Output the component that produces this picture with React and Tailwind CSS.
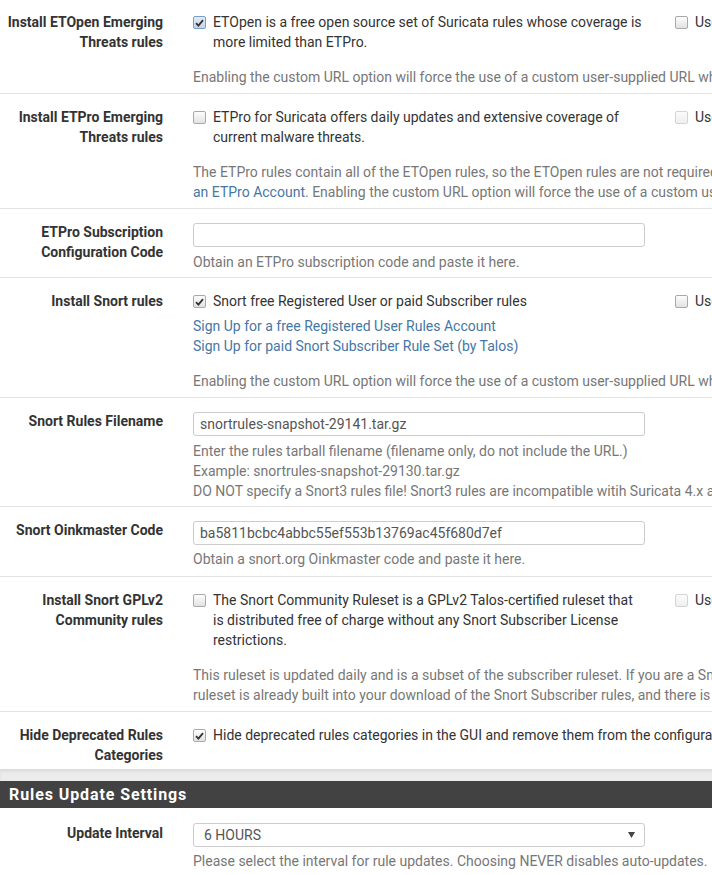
import React from "react";

const Check = ({ checked = false, kind = "normal" }) => {
  let cls =
    "mt-[4px] w-[13px] h-[13px] shrink-0 rounded-[2px] border flex items-center justify-center ";
  if (kind === "focus") cls += "border-[#7a9cc8] bg-gradient-to-b from-[#e2ecf8] to-[#c3d3e8]";
  else if (kind === "disabled") cls += "border-[#d4d4d4] bg-gradient-to-b from-[#fbfbfb] to-[#efefef]";
  else cls += "border-[#a9a9a9] bg-gradient-to-b from-[#fdfdfd] to-[#e2e2e2]";
  return (
    <span className={cls}>
      {checked && (
        <svg width="9" height="8" viewBox="0 0 9 8">
          <path d="M1 4.2 L3.4 6.6 L8 1.2" fill="none" stroke="#333" strokeWidth="1.8" />
        </svg>
      )}
    </span>
  );
};

const Row = ({ label, children, first = false, last = false, pb = "pb-[6px]" }) => (
  <div
    className={
      "flex border-[#e3e3e3] " +
      (last ? "" : "border-b ") +
      (first ? "pt-[12px] " : "pt-[13px] ") +
      pb
    }
  >
    <div className="w-[178px] shrink-0 pr-[15px] text-right font-bold text-[#333] whitespace-nowrap">
      {label}
    </div>
    <div className="w-[964px] shrink-0 px-[15px]">{children}</div>
  </div>
);

const Help = ({ children, className = "" }) => (
  <div className={"text-[#777] whitespace-nowrap " + className}>{children}</div>
);

const CheckLine = ({ checked, kind, children }) => (
  <div className="flex gap-[7px] text-[#333]">
    <Check checked={checked} kind={kind} />
    <div className="whitespace-nowrap">{children}</div>
  </div>
);

const TwoCol = ({ left, right }) => (
  <div className="flex gap-[30px]">
    <div className="w-[452px] shrink-0">{left}</div>
    <div className="w-[452px] shrink-0">{right}</div>
  </div>
);

const Input = ({ value }) => (
  <div className="mt-[1px] w-[452px] h-[24px] border border-[#ccc] rounded-[3px] pl-[6px] text-[#555] leading-[22px] whitespace-nowrap">
    {value}
  </div>
);

export default function App() {
  return (
    <div className="w-[712px] h-[875px] overflow-hidden bg-white font-['Roboto','Liberation_Sans',sans-serif] text-[14px] leading-[20px]">
      <div className="w-[1160px]">
        <Row
          first
          label={
            <>
              Install ETOpen Emerging
              <br />
              Threats rules
            </>
          }
        >
          <TwoCol
            left={
              <CheckLine checked kind="focus">
                ETOpen is a free open source set of Suricata rules whose coverage is
                <br />
                more limited than ETPro.
              </CheckLine>
            }
            right={<CheckLine>Use a custom URL for ETOpen downloads</CheckLine>}
          />
          <Help className="mt-[15px]">
            Enabling the custom URL option will force the use of a custom user-supplied URL when downloading ETOpen rules.
          </Help>
        </Row>

        <Row
          label={
            <>
              Install ETPro Emerging
              <br />
              Threats rules
            </>
          }
        >
          <TwoCol
            left={
              <CheckLine>
                ETPro for Suricata offers daily updates and extensive coverage of
                <br />
                current malware threats.
              </CheckLine>
            }
            right={<CheckLine kind="disabled">Use a custom URL for ETPro downloads</CheckLine>}
          />
          <Help className="mt-[15px]">
            The ETPro rules contain all of the ETOpen rules, so the ETOpen rules are not required and should be disabled when the ETPro rules are selected. Sign up for
            <br />
            <span className="text-[#4577a5]">an ETPro Account</span>. Enabling the custom URL option will force the use of a custom user-supplied URL when downloading ETPro rules.
          </Help>
        </Row>

        <Row
          pb="pb-[5px]"
          label={
            <>
              ETPro Subscription
              <br />
              Configuration Code
            </>
          }
        >
          <Input value="" />
          <Help className="mt-[5px]">Obtain an ETPro subscription code and paste it here.</Help>
        </Row>

        <Row label="Install Snort rules">
          <TwoCol
            left={<CheckLine checked>Snort free Registered User or paid Subscriber rules</CheckLine>}
            right={<CheckLine>Use a custom URL for Snort rule downloads</CheckLine>}
          />
          <div className="mt-[5px] text-[#4577a5] whitespace-nowrap">
            <div>Sign Up for a free Registered User Rules Account</div>
            <div>Sign Up for paid Snort Subscriber Rule Set (by Talos)</div>
          </div>
          <Help className="mt-[15px]">
            Enabling the custom URL option will force the use of a custom user-supplied URL when downloading Snort rules.
          </Help>
        </Row>

        <Row label="Snort Rules Filename" pb="pb-[5px]">
          <Input value="snortrules-snapshot-29141.tar.gz" />
          <Help className="mt-[5px]">
            Enter the rules tarball filename (filename only, do not include the URL.)
            <br />
            Example: snortrules-snapshot-29130.tar.gz
            <br />
            DO NOT specify a Snort3 rules file! Snort3 rules are incompatible witih Suricata 4.x and later.
          </Help>
        </Row>

        <Row label="Snort Oinkmaster Code" pb="pb-[7px]">
          <Input value="ba5811bcbc4abbc55ef553b13769ac45f680d7ef" />
          <Help className="mt-[4px]">Obtain a snort.org Oinkmaster code and paste it here.</Help>
        </Row>

        <Row
          label={
            <>
              Install Snort GPLv2
              <br />
              Community rules
            </>
          }
        >
          <TwoCol
            left={
              <CheckLine>
                The Snort Community Ruleset is a GPLv2 Talos-certified ruleset that
                <br />
                is distributed free of charge without any Snort Subscriber License
                <br />
                restrictions.
              </CheckLine>
            }
            right={<CheckLine kind="disabled">Use a custom URL for Snort GPLv2 downloads</CheckLine>}
          />
          <Help className="mt-[15px]">
            This ruleset is updated daily and is a subset of the subscriber ruleset. If you are a Snort Subscriber Rules customer, the community
            <br />
            ruleset is already built into your download of the Snort Subscriber rules, and there is no benefit in adding this rule set separately.
          </Help>
        </Row>

        <Row
          last
          pb="pb-[4px]"
          label={
            <>
              Hide Deprecated Rules
              <br />
              Categories
            </>
          }
        >
          <CheckLine checked>
            Hide deprecated rules categories in the GUI and remove them from the configuration. Default is Not Checked.
          </CheckLine>
        </Row>

        <div className="h-[12px] bg-[#ececec] border-t border-[#dcdcdc] shadow-[inset_0_2px_3px_rgba(0,0,0,0.06)]" />

        <div className="h-[27px] bg-[#424242] flex items-center pl-[9px]">
          <span className="text-white font-bold text-[16px] tracking-[0.9px] font-['Roboto','Liberation_Sans',sans-serif]">
            Rules Update Settings
          </span>
        </div>

        <div className="flex pt-[15px] pb-[6px]">
          <div className="w-[178px] shrink-0 pr-[15px] text-right font-bold text-[#333] whitespace-nowrap">
            Update Interval
          </div>
          <div className="w-[964px] shrink-0 px-[15px]">
            <div className="w-[452px] h-[24px] border border-[#ccc] rounded-[3px] pl-[10px] pr-[9px] text-[#555] leading-[22px] flex items-center justify-between">
              <span>6 HOURS</span>
              <svg width="7" height="6" viewBox="0 0 7 6">
                <path d="M0 0 L7 0 L3.5 6 Z" fill="#444" />
              </svg>
            </div>
            <Help className="mt-[4px]">
              Please select the interval for rule updates. Choosing NEVER disables auto-updates.
            </Help>
          </div>
        </div>
      </div>
    </div>
  );
}
